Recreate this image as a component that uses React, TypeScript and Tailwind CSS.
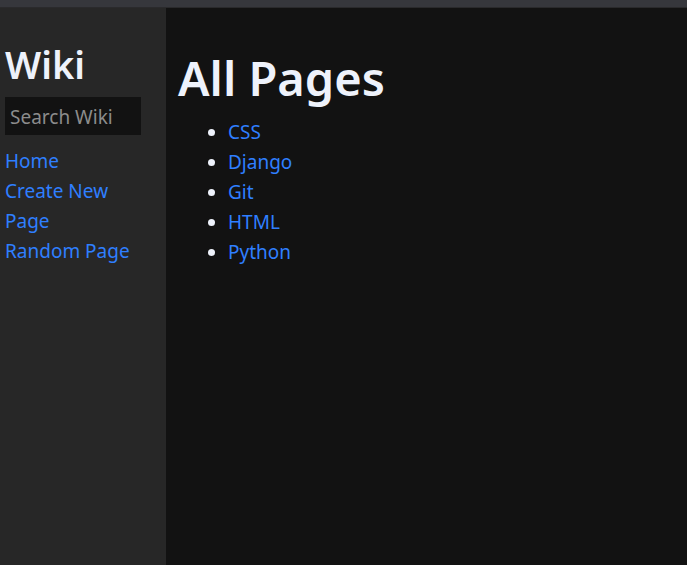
const navLinks = ["Home", "Create New Page", "Random Page"];
const entries = ["CSS", "Django", "Git", "HTML", "Python"];

export default function App() {
  return (
    <div className="flex min-h-screen flex-col bg-[#121212] font-['Noto_Sans',sans-serif] text-[19px] leading-[30px] text-[#eef2fb]">
      <div className="h-2 border-b border-[#2a2a2c] bg-[#36373c]" />
      <div className="flex grow">
        <aside className="w-[166px] shrink-0 bg-[#272727] pt-8 pr-[25px] pl-[5px]">
          <h2 className="mb-[9px] text-[38px] leading-[48px] font-semibold">Wiki</h2>
          <form className="mb-[11px]" onSubmit={(e) => e.preventDefault()}>
            <input
              type="text"
              name="q"
              aria-label="Search Wiki"
              placeholder="Search Wiki"
              className="block h-[38px] w-full bg-[#121212] px-[5px] pt-[2px] placeholder:text-[#8c8c8c]"
            />
          </form>
          <nav>
            {navLinks.map((label) => (
              <div key={label}>
                <a href="#" className="text-[#2f7fff]">{label}</a>
              </div>
            ))}
          </nav>
        </aside>
        <main className="grow px-3 pt-10">
          <h1 className="mb-[9px] text-[47px] leading-[60px] font-semibold">All Pages</h1>
          <ul className="list-disc pl-[50px]">
            {entries.map((title) => (
              <li key={title}>
                <a href="#" className="text-[#2f7fff]">{title}</a>
              </li>
            ))}
          </ul>
        </main>
      </div>
    </div>
  );
}
